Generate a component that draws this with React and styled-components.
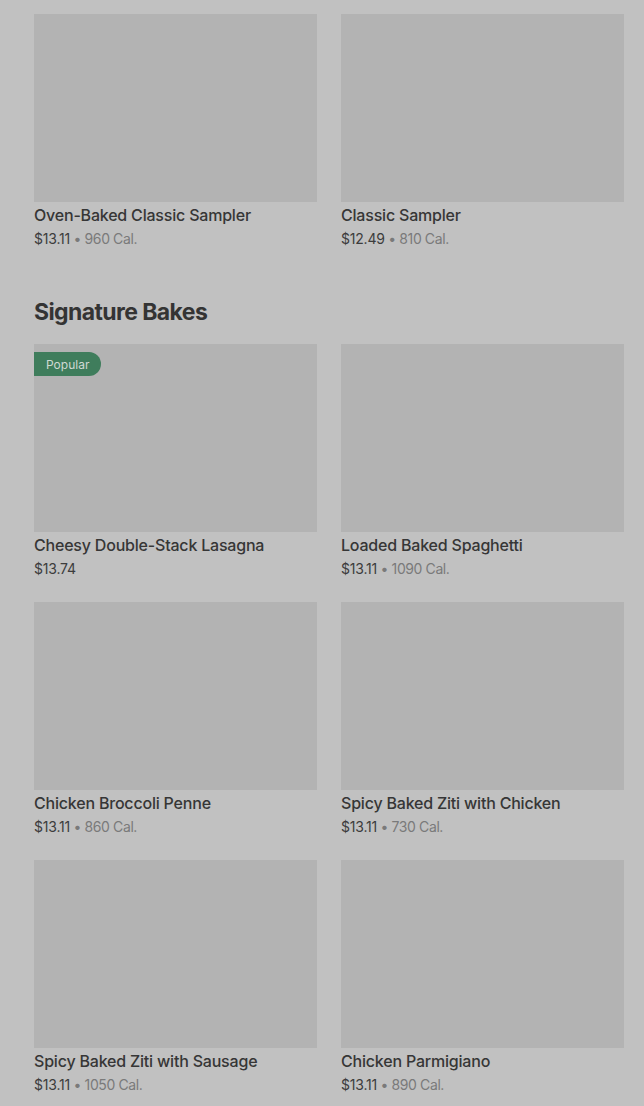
import React from "react";
import styled, { createGlobalStyle } from "styled-components";

const GlobalStyle = createGlobalStyle`
  html, body {
    margin: 0;
    padding: 0;
    background: #c1c1c1;
  }
  body {
    font-family: Inter, "Liberation Sans", sans-serif;
    color: #343434;
  }
`;

const Page = styled.div`
  padding: 14px 20px 0 34px;
  display: flex;
  flex-direction: column;
`;

const Grid = styled.div`
  display: grid;
  grid-template-columns: 283px 283px;
  column-gap: 24px;
  row-gap: 21px;
`;

const SectionTitle = styled.h2`
  margin: 45px 0 16px;
  font-size: 23px;
  line-height: 32px;
  font-weight: 700;
  letter-spacing: -0.6px;
  color: #343434;
`;

const Card = styled.div`
  display: flex;
  flex-direction: column;
`;

const Thumb = styled.div`
  position: relative;
  height: 188px;
  background: #b3b3b3;
`;

const Badge = styled.span`
  position: absolute;
  top: 8px;
  left: 0;
  height: 24px;
  padding: 0 12px;
  display: flex;
  align-items: center;
  background: #3f7d5c;
  color: #cfd9d3;
  font-size: 12px;
  border-radius: 0 12px 12px 0;
`;

const Name = styled.div`
  margin-top: 1px;
  font-size: 16px;
  line-height: 24px;
  font-weight: 500;
  letter-spacing: -0.2px;
  color: #363636;
`;

const Meta = styled.div`
  font-size: 14px;
  line-height: 24px;
  color: #7a7a7a;
  letter-spacing: -0.4px;
`;

const Price = styled.span`
  color: #3c3c3c;
  letter-spacing: -0.2px;
`;

const Item = ({ name, price, cal, badge }) => (
  <Card>
    <Thumb>{badge && <Badge>{badge}</Badge>}</Thumb>
    <Name>{name}</Name>
    <Meta>
      <Price>{price}</Price>
      {cal && ` • ${cal} Cal.`}
    </Meta>
  </Card>
);

const samplers = [
  { name: "Oven-Baked Classic Sampler", price: "$13.11", cal: "960" },
  { name: "Classic Sampler", price: "$12.49", cal: "810" },
];

const bakes = [
  { name: "Cheesy Double-Stack Lasagna", price: "$13.74", badge: "Popular" },
  { name: "Loaded Baked Spaghetti", price: "$13.11", cal: "1090" },
  { name: "Chicken Broccoli Penne", price: "$13.11", cal: "860" },
  { name: "Spicy Baked Ziti with Chicken", price: "$13.11", cal: "730" },
  { name: "Spicy Baked Ziti with Sausage", price: "$13.11", cal: "1050" },
  { name: "Chicken Parmigiano", price: "$13.11", cal: "890" },
];

export default function App() {
  return (
    <>
      <GlobalStyle />
      <Page>
        <Grid>
          {samplers.map((it) => (
            <Item key={it.name} {...it} />
          ))}
        </Grid>
        <SectionTitle>Signature Bakes</SectionTitle>
        <Grid>
          {bakes.map((it) => (
            <Item key={it.name} {...it} />
          ))}
        </Grid>
      </Page>
    </>
  );
}
